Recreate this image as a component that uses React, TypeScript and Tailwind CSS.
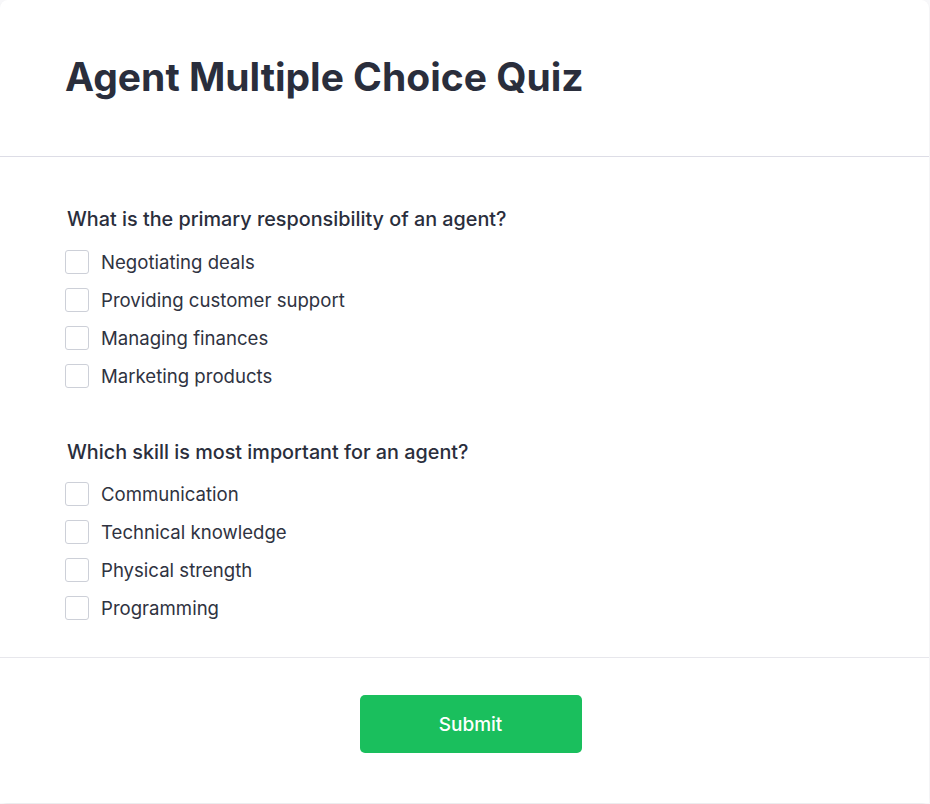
import React from "react";

const questions = [
  {
    q: "What is the primary responsibility of an agent?",
    options: ["Negotiating deals", "Providing customer support", "Managing finances", "Marketing products"],
  },
  {
    q: "Which skill is most important for an agent?",
    options: ["Communication", "Technical knowledge", "Physical strength", "Programming"],
  },
];

export default function App() {
  return (
    <div className="min-h-[804px] bg-[#f7f7f9]" style={{ fontFamily: "Inter, 'Noto Sans', sans-serif" }}>
      <div className="w-[929px] h-[803px] bg-white rounded-lg shadow-[0_1px_2px_rgba(0,0,0,0.06)] flex flex-col">
        <div className="pl-[65px] pt-[57px] pb-[59px] border-b border-[#dddde6]">
          <h1 className="text-[39px] leading-[40px] font-bold text-[#2a2e3c]">Agent Multiple Choice Quiz</h1>
        </div>
        <div className="pl-[65px] pt-[48px] pb-[35px] border-b border-[#e7e7ec] flex flex-col gap-[48px]">
          {questions.map((qq, i) => (
            <div key={qq.q}>
              <div className={`pl-[2px] text-[19.8px] leading-[28px] font-medium text-[#2a2e3c] ${i === 0 ? "mb-[15px]" : "mb-[14px]"}`}>{qq.q}</div>
              <div className="flex flex-col gap-[10px]">
                {qq.options.map((o) => (
                  <label key={o} className="flex items-center gap-[12px] h-[28px]">
                    <span className="w-[24px] h-[24px] rounded-[3px] border border-[#cdd0d8] bg-white shrink-0" />
                    <span className="text-[18.6px] leading-[28px] text-[#2f3341]">{o}</span>
                  </label>
                ))}
              </div>
            </div>
          ))}
        </div>
        <div className="flex-1 flex justify-center pt-[37px] pl-[12px] bg-white">
          <button className="w-[222px] h-[58px] pt-[3px] rounded-[5px] bg-[#1abf5d] text-white text-[19px] font-medium">Submit</button>
        </div>
      </div>
    </div>
  );
}
